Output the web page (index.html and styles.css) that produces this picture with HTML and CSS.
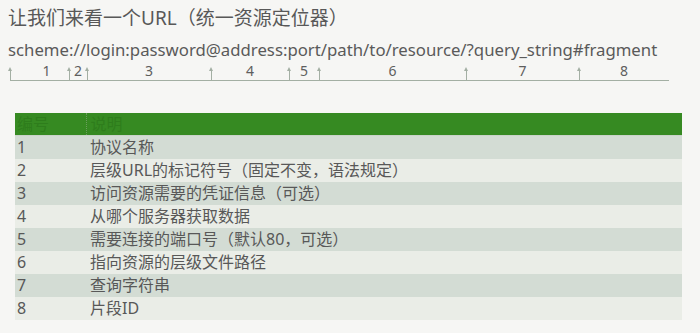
FILE: index.html
```html
<!DOCTYPE html>
<html lang="zh-CN">
<head>
<meta charset="utf-8">
<link rel="stylesheet" href="styles.css">
</head>
<body>
<h1 class="title">让我们来看一个URL（统一资源定位器）</h1>
<p class="url">scheme://login:password@address:port/path/to/resource/?query_string#fragment</p>
<div class="ticks">
  <span class="seg first" style="width:59px">1</span>
  <span class="seg" style="width:18px">2</span>
  <span class="seg" style="width:124px">3</span>
  <span class="seg" style="width:78px">4</span>
  <span class="seg" style="width:30px">5</span>
  <span class="seg" style="width:147px">6</span>
  <span class="seg" style="width:113px">7</span>
  <span class="seg" style="width:90px">8</span>
</div>
<table class="parts">
  <thead>
    <tr><th class="num">编号</th><th class="desc">说明</th></tr>
  </thead>
  <tbody>
    <tr><td class="num">1</td><td class="desc">协议名称</td></tr>
    <tr><td class="num">2</td><td class="desc">层级URL的标记符号（固定不变，语法规定）</td></tr>
    <tr><td class="num">3</td><td class="desc">访问资源需要的凭证信息（可选）</td></tr>
    <tr><td class="num">4</td><td class="desc">从哪个服务器获取数据</td></tr>
    <tr><td class="num">5</td><td class="desc">需要连接的端口号（默认80，可选）</td></tr>
    <tr><td class="num">6</td><td class="desc">指向资源的层级文件路径</td></tr>
    <tr><td class="num">7</td><td class="desc">查询字符串</td></tr>
    <tr><td class="num">8</td><td class="desc">片段ID</td></tr>
  </tbody>
</table>
</body>
</html>
```

FILE: styles.css
```css
html, body {
  margin: 0;
  padding: 0;
  background: #f6f6f4;
}
body {
  font-family: "Noto Sans", "Noto Sans CJK SC", sans-serif;
  color: #585858;
  width: 700px;
  height: 333px;
  overflow: hidden;
}
.title {
  margin: 5px 0 0 8px;
  font-size: 19px;
  font-weight: normal;
  line-height: 26px;
  color: #585858;
}
.url {
  margin: 8px 0 0 8px;
  font-size: 16.75px;
  line-height: 22px;
  color: #5a5a5a;
}
.ticks {
  display: flex;
  margin: 1px 0 0 10px;
  height: 18px;
  border-bottom: 1px solid #a3afa3;
  width: 659px;
}
.seg {
  position: relative;
  display: block;
  height: 18px;
  font-size: 14px;
  line-height: 18px;
  text-align: center;
  color: #5e5e5e;
  flex: none;
}
.seg.first {
  padding-left: 14px;
  box-sizing: border-box;
}
.seg::before {
  content: "";
  position: absolute;
  left: 0;
  bottom: 0;
  width: 1px;
  height: 10px;
  background: #a3afa3;
}
.seg::after {
  content: "";
  position: absolute;
  left: -2px;
  bottom: 9px;
  border-left: 2.5px solid transparent;
  border-right: 2.5px solid transparent;
  border-bottom: 4px solid #a3afa3;
}
.ticks::after {
  content: "";
  width: 1px;
  height: 10px;
  align-self: flex-end;
  background: #a3afa3;
  box-shadow: 0 -1px 0 #a3afa3;
}
.parts {
  margin: 32px 0 0 15px;
  width: 667px;
  border-collapse: collapse;
  font-size: 16px;
}
.parts th {
  background: #368a22;
  color: #2e7d1c;
  font-weight: normal;
  text-align: left;
  height: 22px;
  line-height: 22px;
  padding: 0;
  border-bottom: 1px solid #c9d3c9;
}
.parts th.num {
  border-right: 1px dotted #6a9f5c;
}
.parts td {
  height: 23px;
  line-height: 23px;
  padding: 0;
  color: #585858;
}
.parts .num {
  width: 71px;
  padding-left: 2px;
  box-sizing: border-box;
}
.parts .desc {
  padding-left: 4px;
}
.parts tbody tr:nth-child(odd) {
  background: #d3dcd4;
}
.parts tbody tr:nth-child(even) {
  background: #eaede7;
}
```
